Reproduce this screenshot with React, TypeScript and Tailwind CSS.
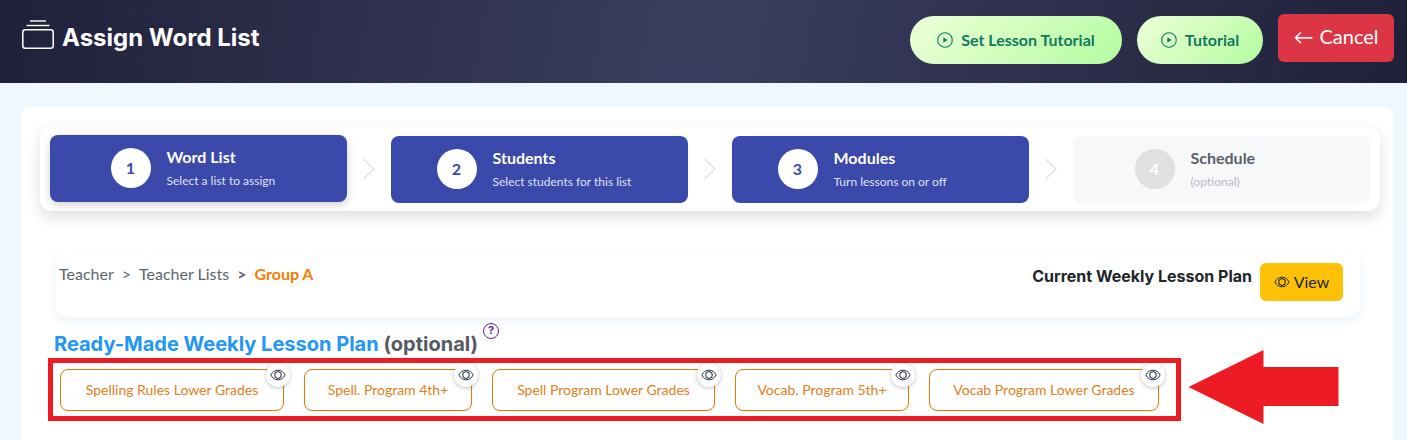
import React from "react";

const nunito = "font-['Lato','Noto_Sans',sans-serif]";
const mont = "font-['Inter','Liberation_Sans',sans-serif]";

function Play({ className = "" }: { className?: string }) {
  return (
    <svg viewBox="0 0 16 16" className={className} fill="none">
      <circle cx="8" cy="8" r="7.3" stroke="currentColor" strokeWidth="1.1" />
      <path d="M6.3 5.2 L10.6 8 L6.3 10.8 Z" fill="currentColor" />
    </svg>
  );
}

function Eye({ className = "" }: { className?: string }) {
  return (
    <svg viewBox="0 0 16 16" className={className} fill="none" stroke="currentColor">
      <path d="M0.8 8 C2.6 4.8 5 3.2 8 3.2 C11 3.2 13.4 4.8 15.2 8 C13.4 11.2 11 12.8 8 12.8 C5 12.8 2.6 11.2 0.8 8 Z" strokeWidth="1" />
      <circle cx="8" cy="8" r="3.2" strokeWidth="1.1" />
    </svg>
  );
}

function Stack() {
  return (
    <svg viewBox="0 0 32 30" className="w-8 h-[30px] text-white" fill="none" stroke="currentColor">
      <path d="M8 1 H24" strokeWidth="1.4" />
      <path d="M4.5 5.5 H27.5" strokeWidth="1.4" />
      <rect x="0.8" y="9.8" width="30.4" height="18.4" rx="2.5" strokeWidth="1.5" />
    </svg>
  );
}

function Chevron() {
  return (
    <div className="w-11 flex items-center justify-center">
      <svg viewBox="0 0 14 22" className="w-3.5 h-[22px] text-[#dde1ea]" fill="none" stroke="currentColor" strokeWidth="1.3">
        <path d="M1.5 1 L12 11 L1.5 21" />
      </svg>
    </div>
  );
}

function Step({ n, title, sub, first, off }: { n: string; title: string; sub: string; first?: boolean; off?: boolean }) {
  return (
    <div
      className={`w-[297px] h-[67px] rounded-lg flex items-center justify-center gap-4 ${
        off ? "bg-[#f7f8fa]" : "bg-[#3a49aa]"
      } ${first ? "-mt-0.5 shadow-[0_3px_8px_rgba(0,0,0,0.18)]" : ""}`}
    >
      <div
        className={`w-10 h-10 rounded-full flex items-center justify-center text-base font-bold ${
          off ? "bg-[#e0e0e0] text-white" : "bg-white text-[#3a49aa]"
        }`}
      >
        {n}
      </div>
      <div className={off ? "w-[118px]" : first ? "w-[120px]" : "w-[150px]"}>
        <div className={`text-base font-bold leading-6 ${off ? "text-[#5a5f6b]" : "text-white"}`}>{title}</div>
        <div className={`text-xs leading-5 mt-0.5 ${off ? "text-[#b6bac6]" : "text-[#dfe2f3]"}`}>{sub}</div>
      </div>
    </div>
  );
}

function Chip({ label, w }: { label: string; w: string }) {
  return (
    <div className={`relative h-[42px] ${w} rounded-lg border border-[#e07b0a] bg-white flex items-center justify-center text-sm text-[#e0801a] shadow-[0_1px_2px_rgba(0,0,0,0.06)]`}>
      {label}
      <div className="absolute -top-[7px] -right-[7px] w-6 h-6 rounded-full bg-white shadow-[0_1px_4px_rgba(0,0,0,0.25)] flex items-center justify-center text-[#2d3748]">
        <Eye className="w-4 h-4" />
      </div>
    </div>
  );
}

export default function App() {
  return (
    <div className={`relative w-[1407px] h-[440px] overflow-hidden bg-[#f0f8ff] ${nunito}`}>
      <header className="h-[83px] bg-[linear-gradient(100deg,#20203a_0%,#3b3e5e_50%,#20203a_100%)] flex justify-between pl-[22px] pr-[13px]">
        <div className="flex items-start gap-2 pt-5">
          <Stack />
          <h1 className={`${mont} text-2xl font-bold text-white leading-9`}>Assign Word List</h1>
        </div>
        <div className="flex items-start pt-3.5">
          <button className="mt-0.5 w-[212px] h-12 rounded-3xl bg-[linear-gradient(135deg,#edffd8,#b4fca0)] flex items-center justify-center gap-2 text-[#0f7a5c] text-base font-bold">
            <Play className="w-4 h-4" />
            Set Lesson Tutorial
          </button>
          <button className="mt-0.5 ml-[15px] w-[126px] h-12 rounded-3xl bg-[linear-gradient(135deg,#edffd8,#b4fca0)] flex items-center justify-center gap-2 text-[#0f7a5c] text-base font-bold">
            <Play className="w-4 h-4" />
            Tutorial
          </button>
          <button className="ml-[15px] w-[116px] h-12 rounded-md bg-[#dc3545] text-white text-xl flex items-center justify-center gap-1.5 pb-1">
            <span>←</span>
            Cancel
          </button>
        </div>
      </header>

      <main className="mt-6 ml-[22px] w-[1371px] h-[340px] bg-white rounded-t-lg pt-5 pl-[18px]">
        <div className="w-[1340px] h-[84px] bg-white rounded-xl shadow-[0_6px_16px_rgba(0,0,0,0.13)] pl-2.5 flex items-center">
          <Step first n="1" title="Word List" sub="Select a list to assign" />
          <Chevron />
          <Step n="2" title="Students" sub="Select students for this list" />
          <Chevron />
          <Step n="3" title="Modules" sub="Turn lessons on or off" />
          <Chevron />
          <Step off n="4" title="Schedule" sub="(optional)" />
        </div>

        <div className="mt-[39px] ml-[15px] w-[1305px] h-[67px] rounded-b-xl shadow-[0_4px_8px_rgba(120,160,210,0.14)] flex justify-between pl-1 pr-[17px]">
          <div className="text-[#5f6470] text-base leading-6 pt-3 flex gap-2">
            <span>Teacher</span>
            <span>&gt;</span>
            <span>Teacher Lists</span>
            <span className="font-bold">&gt;</span>
            <span className="text-[#f57c00] font-bold">Group A</span>
          </div>
          <div className="flex items-start gap-2 pt-[13px]">
            <span className={`${mont} font-bold text-base text-[#212529] leading-6 pt-px`}>Current Weekly Lesson Plan</span>
            <button className="w-[83px] h-[38px] rounded-md bg-[#ffc107] text-[#212529] text-base flex items-center justify-center gap-1">
              <Eye className="w-4 h-4" />
              View
            </button>
          </div>
        </div>

        <div className={`${mont} ml-3.5 mt-[13px] h-7 text-xl font-bold leading-7 relative w-fit`}>
          <span className="text-[#2196f3]">Ready-Made Weekly Lesson Plan</span>{" "}
          <span className="text-[#555a63]">(optional)</span>
          <span className="absolute -top-[7px] -right-[21px] w-4 h-4 rounded-full border-[1.5px] border-[#6a1b9a] text-[#6a1b9a] text-[11px] leading-[13px] text-center font-bold">?</span>
        </div>

        <div className="-ml-px mt-0 w-[1133px] h-[63px] border-[5px] border-[#ed1c24] ml-[8px] pl-[7px] pt-1.5 flex gap-5">
          <Chip label="Spelling Rules Lower Grades" w="w-[224px]" />
          <Chip label="Spell. Program 4th+" w="w-[168px]" />
          <Chip label="Spell Program Lower Grades" w="w-[223px]" />
          <Chip label="Vocab. Program 5th+" w="w-[174px]" />
          <Chip label="Vocab Program Lower Grades" w="w-[230px]" />
        </div>
      </main>

      <svg viewBox="0 0 150 74" className="absolute left-[1188px] top-[350px] w-[151px] h-[74px] text-[#ed1c24]" fill="currentColor">
        <path d="M0 37 L75 0 L75 17 L150 17 L150 56 L75 56 L75 74 Z" />
      </svg>
    </div>
  );
}
